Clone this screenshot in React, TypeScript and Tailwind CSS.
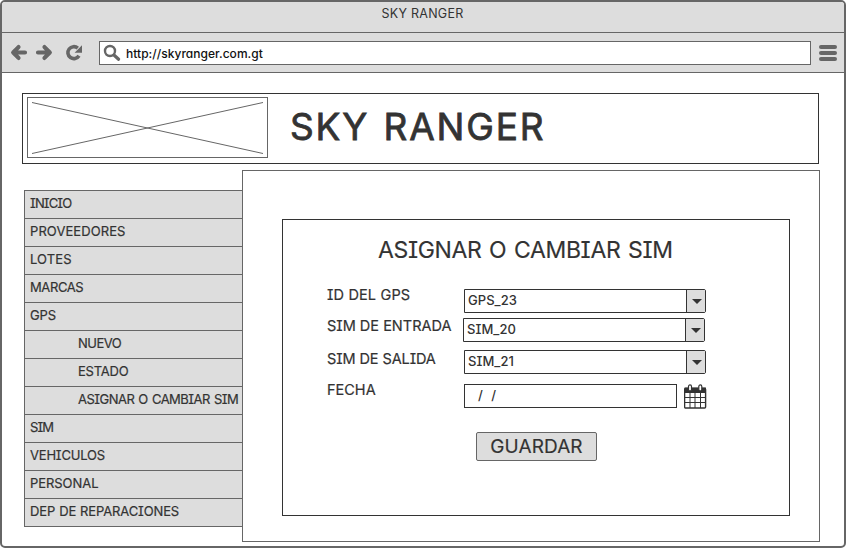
import type { ReactNode } from "react";

const menu: { label: string; sub?: boolean; tracking: string }[] = [
  { label: "INICIO", tracking: "tracking-[-0.85px]" },
  { label: "PROVEEDORES", tracking: "tracking-[0.08px]" },
  { label: "LOTES", tracking: "tracking-[0.1px]" },
  { label: "MARCAS", tracking: "tracking-[-0.4px]" },
  { label: "GPS", tracking: "tracking-[-0.1px]" },
  { label: "NUEVO", sub: true, tracking: "tracking-[-0.5px]" },
  { label: "ESTADO", sub: true, tracking: "tracking-[-0.2px]" },
  { label: "ASIGNAR O CAMBIAR SIM", sub: true, tracking: "tracking-[-0.52px] [word-spacing:1px]" },
  { label: "SIM", tracking: "tracking-[-0.9px]" },
  { label: "VEHICULOS", tracking: "tracking-[-0.2px]" },
  { label: "PERSONAL", tracking: "tracking-[-0.05px]" },
  { label: "DEP DE REPARACIONES", tracking: "tracking-[-0.13px] [word-spacing:0.5px]" },
];

function Toolbar() {
  return (
    <div className="flex h-10 items-center border-b border-[#666] pl-2">
      <svg className="h-[19px] w-[74px] shrink-0" viewBox="0 0 74 19" fill="none" stroke="#666">
        <g strokeWidth="4.2" strokeLinecap="round" strokeLinejoin="round">
          <path d="M15 9.500H5M8.500 4.100 3.200 9.500 8.500 14.900" />
          <path d="M28 9.500H38M34.500 4.100 39.800 9.500 34.500 14.900" />
        </g>
        <path d="M69 12.800A6 6 0 1 1 67.800 5.100" strokeWidth="3.6" />
        <path d="M72 2.300v7.400h-7.400z" fill="#666" stroke="none" />
      </svg>
      <div className="ml-[15px] flex h-6 w-[712px] shrink-0 items-center border border-[#666] bg-white">
        <svg className="ml-[3px] size-[18px] shrink-0" viewBox="0 0 18 18" fill="none" stroke="#666">
          <circle cx="7" cy="7" r="5" strokeWidth="2.4" />
          <path d="m11.200 11.200 4.400 4" strokeWidth="3.2" strokeLinecap="round" />
        </svg>
        <span className="ml-[5px] pt-[2px] text-[12px] font-medium leading-[14px] tracking-[0.03px] text-[#111]">
          http://skyranger.com.gt
        </span>
      </div>
      <div className="ml-2 flex w-[18px] flex-col gap-[2px]">
        <div className="h-1 rounded-full bg-[#666]" />
        <div className="h-1 rounded-full bg-[#666]" />
        <div className="h-1 rounded-full bg-[#666]" />
      </div>
    </div>
  );
}

function Field({ label, row, labelClass, children }: { label: string; row: string; labelClass: string; children: ReactNode }) {
  return (
    <div className={`flex h-6 ${row}`}>
      <span className={`w-[137px] shrink-0 whitespace-nowrap text-[14.5px] leading-[12px] [-webkit-text-stroke:0.2px_#333] ${labelClass}`}>{label}</span>
      {children}
    </div>
  );
}

function Select({ value, className = "" }: { value: string; className?: string }) {
  return (
    <div className={`flex h-6 w-[242px] shrink-0 rounded-r-[2px] border border-[#333] ${className}`}>
      <span className="flex-1 pl-[3px] text-[13px] font-medium leading-[21px] tracking-[0.05px]">{value}</span>
      <span className="flex w-[19px] items-center justify-center border-l border-[#333] bg-[#ddd] pl-[1px]">
        <svg className="h-[5px] w-[10px]" viewBox="0 0 10 5">
          <path d="M0 0H10L5 5z" fill="#333" />
        </svg>
      </span>
    </div>
  );
}

function CalendarIcon() {
  return (
    <svg className="ml-[7px] h-[25px] w-[23px] shrink-0" viewBox="0 0 23 25" fill="none" stroke="#333">
      <rect x="0.6" y="4.5" width="21" height="19.5" rx="1" fill="white" strokeWidth="1.4" />
      <path d="M0.500 3.500h21.500v5.500H0.500z" fill="#333" stroke="none" />
      <path d="M6 8v16M11 8v16M16.500 8v16M1 13.500h21M1 18.500h21" strokeWidth="1" />
      <rect x="4.500" y="0.9" width="3" height="6" rx="1.500" fill="white" strokeWidth="1.200" />
      <rect x="14.800" y="0.9" width="3" height="6" rx="1.500" fill="white" strokeWidth="1.200" />
    </svg>
  );
}

export default function App() {
  return (
    <div className="h-[548px] w-[846px] overflow-hidden bg-white font-[Inter,'Liberation_Sans',sans-serif] text-[#333] [font-feature-settings:'cv08','cv11']">
      <div className="h-full overflow-hidden rounded-[5px] border-2 border-[#666]">
        <header className="bg-[#ddd]">
          <div className="h-[31px] border-b border-[#666] pr-[1px] text-center text-[12.5px] leading-[24px] tracking-[0.25px]">SKY RANGER</div>
          <Toolbar />
        </header>

        <div className="ml-5 mt-5 flex h-[71px] w-[797px] border border-[#333] pl-1 pt-[3px]">
          <svg className="h-[61px] w-[241px] shrink-0 border border-[#666]" viewBox="0 0 239 59" stroke="#666">
            <path d="M4 4.500 235 55.500M4 55.500 235 4.500" />
          </svg>
          <h1 className="ml-[22px] whitespace-nowrap text-[37px] font-normal leading-[60px] tracking-[1.85px] [-webkit-text-stroke:0.8px_#333] [stroke-linejoin:round] [word-spacing:2px]">
            SKY RANGER
          </h1>
        </div>

        <div className="ml-[22px] mt-[6px] flex">
          <nav className="mt-5 h-[337px] w-[218px] shrink-0 border-l border-t border-[#666] bg-[#ddd]">
            {menu.map((item) => (
              <div
                key={item.label}
                className={`h-7 whitespace-nowrap border-b border-[#666] text-[13px] leading-[24px] [-webkit-text-stroke:0.2px_#333] ${item.sub ? "pl-[53px]" : "pl-[5px]"} ${item.tracking}`}
              >
                {item.label}
              </div>
            ))}
          </nav>

          <main className="h-[372px] w-[578px] shrink-0 border border-[#666] pl-[39px] pt-12">
            <section className="h-[297px] w-[508px] border border-[#333] pl-11">
              <h2 className="ml-[51px] mt-[18px] whitespace-nowrap text-[23px] leading-[24px] tracking-[-0.35px] [-webkit-text-stroke:0.15px_#333] [word-spacing:1.5px]">
                ASIGNAR O CAMBIAR SIM
              </h2>
              <Field label="ID DEL GPS" row="mt-[27px]" labelClass="tracking-[0.15px]">
                <Select value="GPS_23" />
              </Field>
              <Field label="SIM DE ENTRADA" row="mt-[5px]" labelClass="pt-[2px]">
                <Select value="SIM_20" className="-ml-px" />
              </Field>
              <Field label="SIM DE SALIDA" row="mt-[8px]" labelClass="pt-[3px] tracking-[-0.1px]">
                <Select value="SIM_21" />
              </Field>
              <Field label="FECHA" row="mt-[10px]" labelClass="">
                <div className="h-6 w-[213px] shrink-0 whitespace-pre border border-[#333] pl-[13px] text-[13px] font-medium leading-[21px] [word-spacing:0.8px]">/  /</div>
                <CalendarIcon />
              </Field>
              <button className="ml-[149px] mt-6 block h-[29px] w-[121px] rounded-[2px] border border-[#666] bg-[#ddd] text-[19px] leading-[27px] tracking-[0.1px] [-webkit-text-stroke:0.15px_#333]">
                GUARDAR
              </button>
            </section>
          </main>
        </div>
      </div>
    </div>
  );
}
